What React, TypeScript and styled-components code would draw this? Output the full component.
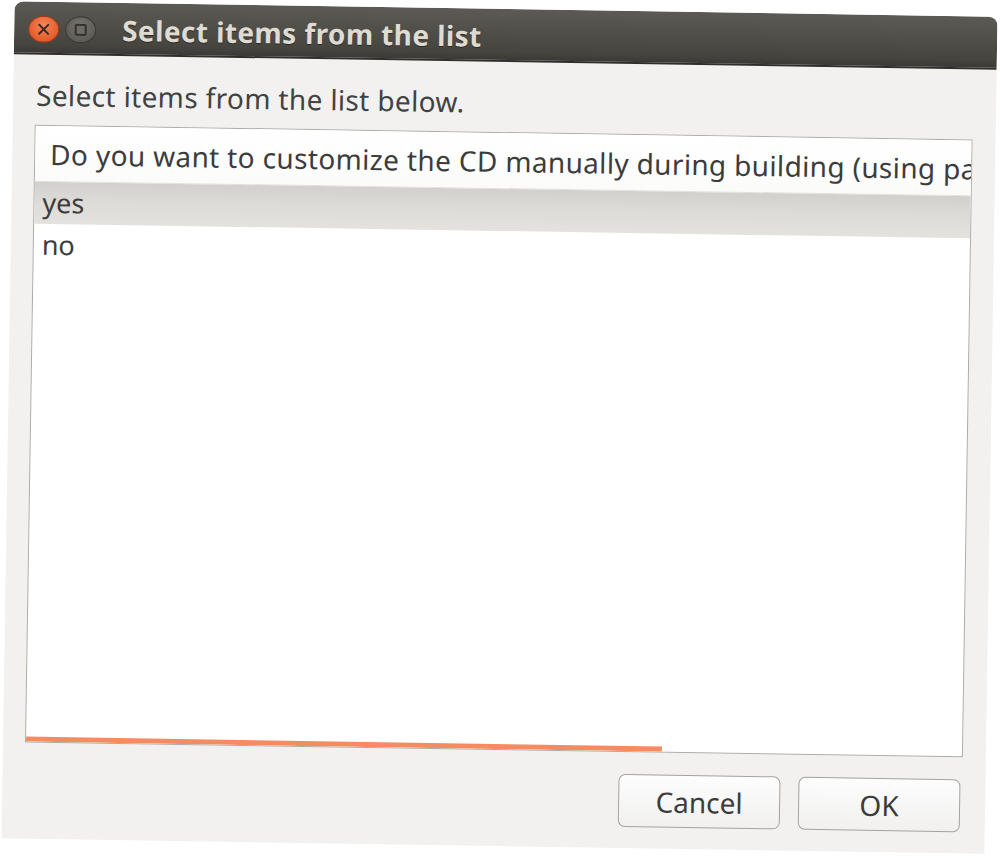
import React from "react";
import styled, { createGlobalStyle } from "styled-components";

const GlobalStyle = createGlobalStyle`
  html, body {
    margin: 0;
    padding: 0;
    background: #ffffff;
  }
  body {
    font-family: "Noto Sans", "Open Sans", "DejaVu Sans", sans-serif;
    color: #3c3c3c;
  }
`;

const Desktop = styled.div`
  width: 1000px;
  height: 861px;
  overflow: hidden;
  box-sizing: border-box;
  padding: 9px 0 0 8px;
  background: #ffffff;
`;

const Window = styled.div`
  width: 983px;
  height: 837px;
  display: flex;
  flex-direction: column;
  background: #f2f1f0;
  border-radius: 9px 9px 0 0;
  overflow: hidden;
  transform: rotate(0.9deg);
  transform-origin: 50% 50%;
`;

const TitleBar = styled.div`
  flex: none;
  height: 53px;
  box-sizing: border-box;
  display: flex;
  align-items: center;
  padding: 3px 0 0 14px;
  background: linear-gradient(#5c5a54, #45443f 85%, #3a3935);
  border-bottom: 2px solid #2f2e2b;
`;

const WinButton = styled.div<{ $variant: "close" | "max" }>`
  flex: none;
  width: 31px;
  height: 27px;
  border-radius: 50%;
  box-sizing: border-box;
  display: flex;
  align-items: center;
  justify-content: center;
  margin-right: 6px;
  background: ${(p) =>
    p.$variant === "close"
      ? "radial-gradient(circle at 50% 35%, #f6855a, #e35d2c 70%, #c84a1f)"
      : "radial-gradient(circle at 50% 35%, #77756f, #5e5c57 70%, #4a4844)"};
  border: 1px solid ${(p) => (p.$variant === "close" ? "#9d3d1a" : "#3a3935")};
`;

const Title = styled.div`
  margin-left: 20px;
  font-family: "Noto Sans", "Open Sans", sans-serif;
  font-weight: 700;
  font-size: 28px;
  line-height: 34px;
  letter-spacing: 0.4px;
  color: #dfdbd2;
  white-space: nowrap;
  text-shadow: 0 1px 0 #2b2a27;
`;

const Body = styled.div`
  flex: 1;
  min-height: 0;
  display: flex;
  flex-direction: column;
  padding: 0 23px 21px 22px;
`;

const Prompt = styled.div`
  margin-top: 22px;
  padding-left: 1px;
  font-size: 28px;
  letter-spacing: 0.35px;
  line-height: 36px;
  color: #424242;
  white-space: nowrap;
`;

const ListFrame = styled.div`
  position: relative;
  margin-top: 12px;
  height: 618px;
  flex: none;
  box-sizing: border-box;
  background: #ffffff;
  border: 1px solid #aeaca7;
  overflow: hidden;
`;

const HeaderCell = styled.div`
  height: 56px;
  box-sizing: border-box;
  padding: 0 0 0 15px;
  display: flex;
  align-items: center;
  background: linear-gradient(#ffffff, #fbfbfa);
  border-bottom: 1px solid #e4e2de;
  font-size: 28px;
  line-height: 34px;
  letter-spacing: 0.35px;
  color: #3c3c3c;
  white-space: nowrap;
  overflow: hidden;
`;

const Row = styled.div<{ $selected?: boolean }>`
  height: 42px;
  box-sizing: border-box;
  display: flex;
  align-items: center;
  padding-left: 8px;
  font-size: 27px;
  line-height: 32px;
  color: #3c3c3c;
  background: ${(p) =>
    p.$selected ? "linear-gradient(#d2d0cc, #dddbd7 45%, #e4e2de)" : "transparent"};
`;

const ScrollIndicator = styled.div`
  position: absolute;
  left: 0;
  bottom: 0;
  height: 5px;
  background: #f58b60;
`;

const ButtonRow = styled.div`
  display: flex;
  justify-content: flex-end;
  gap: 18px;
  margin-top: 22px;
  padding-right: 2px;
`;

const DialogButton = styled.button`
  width: 162px;
  height: 53px;
  box-sizing: border-box;
  border: 1px solid #a5a39e;
  border-radius: 7px;
  background: linear-gradient(#fdfdfd, #f1f0ef);
  box-shadow: inset 0 1px 0 #ffffff;
  font-family: "Noto Sans", "Open Sans", sans-serif;
  font-size: 28px;
  color: #3c3c3c;
  padding: 0;
`;

const CloseIcon = () => (
  <svg width="13" height="13" viewBox="0 0 13 13">
    <path d="M2 2 L11 11 M11 2 L2 11" stroke="#3a2a22" strokeWidth="2" strokeLinecap="round" />
  </svg>
);

const MaxIcon = () => (
  <svg width="13" height="13" viewBox="0 0 13 13">
    <rect x="1.5" y="1.5" width="10" height="10" rx="1" fill="#6e6c67" stroke="#33322f" strokeWidth="2" />
  </svg>
);

export default function App() {
  const items = ["yes", "no"];
  return (
    <>
      <GlobalStyle />
      <Desktop>
        <Window>
          <TitleBar>
            <WinButton $variant="close">
              <CloseIcon />
            </WinButton>
            <WinButton $variant="max">
              <MaxIcon />
            </WinButton>
            <Title>Select items from the list</Title>
          </TitleBar>
          <Body>
            <Prompt>Select items from the list below.</Prompt>
            <ListFrame>
              <HeaderCell>
                Do you want to customize the CD manually during building (using package lists or a shell)?
              </HeaderCell>
              {items.map((it, i) => (
                <Row key={it} $selected={i === 0}>
                  {it}
                </Row>
              ))}
              <ScrollIndicator style={{ width: "68%" }} />
            </ListFrame>
            <ButtonRow>
              <DialogButton>Cancel</DialogButton>
              <DialogButton>OK</DialogButton>
            </ButtonRow>
          </Body>
        </Window>
      </Desktop>
    </>
  );
}
